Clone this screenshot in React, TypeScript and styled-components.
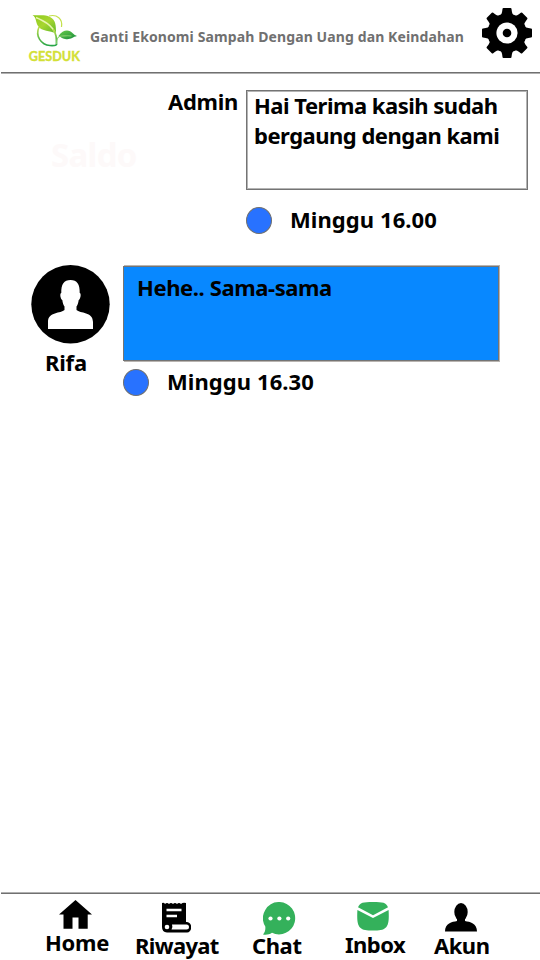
import React from "react";
import styled, { createGlobalStyle } from "styled-components";

const GlobalStyle = createGlobalStyle`
  * { box-sizing: border-box; }
  body { margin: 0; background: #fff; }
`;

const Screen = styled.div`
  display: flex;
  flex-direction: column;
  width: 540px;
  height: 960px;
  overflow: hidden;
  background: #fff;
  color: #000;
  font-family: "Noto Sans", "Open Sans", sans-serif;
  font-weight: 700;
`;

const Header = styled.header`
  display: flex;
  align-items: flex-start;
  height: 73px;
  margin-left: 1px;
  padding: 8px 8px 0 26px;
  border-bottom: 1px solid #707070;
  box-shadow: 0 1px 0 #b0b0b0;
`;

const Tagline = styled.h1`
  flex: 1;
  margin: 19px 0 0 7px;
  font-size: 14px;
  line-height: 20px;
  letter-spacing: 0.11px;
  white-space: nowrap;
  color: #707070;
`;

const Logo = styled.svg`
  flex: none;
  width: 56px;
  height: 56px;
`;

const Label = styled.span<{ $spacing?: number }>`
  font-size: 22px;
  line-height: 30px;
  letter-spacing: ${(p) => p.$spacing ?? 0}px;
  white-space: nowrap;
`;

const Conversation = styled.main`
  flex: 1;
  display: flex;
  flex-direction: column;
  gap: 31px;
  padding-top: 17px;
`;

const Message = styled.section`
  display: flex;
  align-items: flex-start;
`;

const Balance = styled.span`
  width: 117px;
  margin: 43px 0 0 51px;
  font-size: 33px;
  line-height: 44px;
  letter-spacing: -0.7px;
  color: #fdf9f9;
`;

const Sender = styled.div`
  width: 78px;
  margin-top: -4px;
`;

const Profile = styled.div`
  display: flex;
  flex-direction: column;
  width: 92px;
  margin-left: 31px;
`;

const ProfileName = styled.div`
  margin: 3px 0 0 14px;
`;

const Content = styled.div<{ $gap: number }>`
  display: flex;
  flex-direction: column;
  gap: ${(p) => p.$gap}px;
`;

const Bubble = styled.div<{ $own?: boolean }>`
  display: flex;
  flex-direction: column;
  width: ${(p) => (p.$own ? 376 : 282)}px;
  height: ${(p) => (p.$own ? 95 : 100)}px;
  margin-top: ${(p) => (p.$own ? 1 : 0)}px;
  padding: ${(p) => (p.$own ? "6px 13px" : "0 7px")};
  border: 1px solid #747474;
  box-shadow: ${(p) => (p.$own ? "1px 1px 0 #b8b4b0, 1px -1px 0 #b8b4b0" : "inset 0 0 0 1px #b4b4b4")};
  background: ${(p) => (p.$own ? "#0888ff" : "#fff")};

  ${Label} {
    position: relative;
    top: -1px;
  }
`;

const Time = styled.div`
  display: flex;
  align-items: center;
  gap: 18px;
  height: 27px;

  ${Label} {
    margin-top: -3px;
  }
`;

const Dot = styled.i`
  width: 26px;
  height: 27px;
  border: 1.5px solid #707070;
  border-radius: 50%;
  background: #2872ff;
`;

const TabBar = styled.nav`
  display: flex;
  height: 67px;
  margin-left: 1px;
  padding-left: 44px;
  border-top: 1px solid #707070;
  box-shadow: 0 -1px 0 #b0b0b0;
`;

const Tab = styled.a<{ $width: number; $top: number; $inset: number; $label: number }>`
  display: flex;
  flex-direction: column;
  width: ${(p) => p.$width}px;
  padding-top: ${(p) => p.$top}px;

  svg {
    flex: none;
    margin-left: ${(p) => p.$inset}px;
    margin-bottom: ${(p) => p.$label}px;
  }
`;

const GesdukLogo = () => (
  <Logo viewBox="0 0 56 56">
    <defs>
      <linearGradient id="leafLight" x1="0" y1="0" x2="1" y2="1">
        <stop offset="0" stopColor="#8ccb1c" />
        <stop offset="0.5" stopColor="#a8d630" />
        <stop offset="1" stopColor="#5fb82a" />
      </linearGradient>
      <linearGradient id="leafDark" x1="0" y1="0" x2="1" y2="1">
        <stop offset="0" stopColor="#69cc48" />
        <stop offset="1" stopColor="#168b3c" />
      </linearGradient>
      <linearGradient id="stem" x1="0" y1="0" x2="0" y2="1">
        <stop offset="0" stopColor="#c3e04a" />
        <stop offset="1" stopColor="#27a548" />
      </linearGradient>
    </defs>
    <path d="M22 8C30 6 36 11 34.500 19" fill="none" stroke="#c3e04a" strokeWidth="1.200" />
    <path d="M12 19C8 28 14 37 23 37.500q4 .3 6.500-.5" fill="none" stroke="url(#stem)" strokeWidth="1.600" />
    <path d="M5.500 7C12 8 17 6 23 9c6 3 6 9 6 16.500C23 22 15 24 11 18 8.500 14 9.500 9.500 5.500 7Z" fill="url(#leafLight)" />
    <path d="M9 9.500C17 13 25 17 28.500 26" fill="none" stroke="#e9f5b0" strokeWidth="1.500" />
    <path d="M26 21C29.500 26 29.500 30 29.500 37" fill="none" stroke="url(#stem)" strokeWidth="1.700" />
    <path d="M31.500 28C36 21.500 42 21 46 25.500q1.500 1.500 4 2.500C45 29 44 32 38 31c-3-.5-4-2-6.500-3Z" fill="url(#leafDark)" />
    <path d="M29.500 36c0-6 2.500-8 5-8s6-.5 10 0" fill="none" stroke="#86cf6c" strokeWidth="1.100" />
    <text
      x="1.800"
      y="52.600"
      fontFamily="Lato, sans-serif"
      fontSize="12.600"
      fontWeight="700"
      fill="#d3e036"
      stroke="#d3e036"
      strokeWidth="0.400"
      textLength="51"
      lengthAdjust="spacingAndGlyphs"
    >
      GESDUK
    </text>
  </Logo>
);

const teeth = [0, 45, 90, 135, 180, 225, 270, 315];

const GearIcon = () => (
  <svg width="50" height="50" viewBox="-25 -25 50 50">
    <circle r="19.500" />
    {teeth.map((angle) => (
      <path key={angle} transform={`rotate(${angle})`} d="M-8-16C-5.500-18-5-20-4.500-24q0-1 1-1H3.500q1 0 1 1C5-20 5.500-18 8-16Z" />
    ))}
    <circle r="10.6" fill="#fff" />
    <circle r="4.3" />
  </svg>
);

const Avatar = () => (
  <svg width="79" height="79" viewBox="0 0 79 79">
    <circle cx="39.5" cy="39.3" r="39.2" />
    <path
      fill="#fff"
      d="M39.500 15c6.500 0 9.500 4.300 9.200 13 1.700 0 1 6-1 7-.4 3-1 5-2.200 6.500V45c3.600 3.500 16.500 1.500 16.500 12v7H17v-7c0-10.500 13-8.500 16.500-12v-3.500c-1.200-1.500-1.800-3.500-2.200-6.500-2-1-2.700-7-1-7-.3-8.700 2.700-13 9.200-13Z"
    />
  </svg>
);

const HomeIcon = () => (
  <svg width="33" height="29" viewBox="0 0 33 29">
    <path d="M16.500 0 33 14.500H28.700V28.700H19.500V17.500H13.500V28.700H4.500V14.500H0Z" />
  </svg>
);

const HistoryIcon = () => (
  <svg width="29" height="31" viewBox="0 0 29 31">
    <path d="M0 1q2-1 3 1 2-2 4 0 2-2 4 0 2-2 4 0 2-2 4 0 2-2 5-1V20H25a4 5 0 0 1 0 10.500H5Q0 30 0 25Z" />
    <path d="M4.500 8H19.500M4.500 14H15" stroke="#fff" strokeWidth="2.500" />
    <path d="M10 22.500H24.500a2.500 2.500 0 0 1 0 5H9.500Q11 25 10 22.500Z" fill="#fff" />
    <circle cx="5" cy="25" r="2.300" fill="#fff" />
  </svg>
);

const ChatIcon = () => (
  <svg width="33" height="33" viewBox="0 0 33 33">
    <path fill="#34b15b" d="M16.800 0A16.200 16.200 0 1 1 9 30.800C6 32.700 3 33 0 32.500 2 30 2.600 28 2.300 24.500A16.200 16.200 0 0 1 16.800 0Z" />
    <g fill="#fff">
      <circle cx="7.500" cy="16.500" r="2.100" />
      <circle cx="16.400" cy="16.500" r="2.100" />
      <circle cx="25.200" cy="16.500" r="2.100" />
    </g>
  </svg>
);

const InboxIcon = () => (
  <svg width="32" height="29" viewBox="0 0 32 29">
    <path fill="#34b15b" d="M1 5.300C3 .5 6 0 16 0S29 .5 31 5.300L16 13.300Z" />
    <path fill="#34b15b" d="M.4 8 16 16 31.600 8C32.500 25 30.500 28.500 16 28.500S-.5 25 .4 8Z" />
  </svg>
);

const AccountIcon = () => (
  <svg width="32" height="29" viewBox="0 0 32 29">
    <ellipse cx="16" cy="9" rx="6.700" ry="9" />
    <path d="M12 14H20V18C25 19 32 20 32 28.500H0C0 20 7 19 12 18Z" />
  </svg>
);

export default function App() {
  return (
    <>
      <GlobalStyle />
      <Screen>
        <Header>
          <GesdukLogo />
          <Tagline>Ganti Ekonomi Sampah Dengan Uang dan Keindahan</Tagline>
          <GearIcon />
        </Header>
        <Conversation>
          <Message>
            <Balance>Saldo</Balance>
            <Sender>
              <Label $spacing={-0.3}>Admin</Label>
            </Sender>
            <Content $gap={17}>
              <Bubble>
                <Label $spacing={-0.5}>Hai Terima kasih sudah</Label>
                <Label $spacing={-0.5}>bergaung dengan kami</Label>
              </Bubble>
              <Time>
                <Dot />
                <Label $spacing={0.08}>Minggu 16.00</Label>
              </Time>
            </Content>
          </Message>
          <Message>
            <Profile>
              <Avatar />
              <ProfileName>
                <Label $spacing={-0.2}>Rifa</Label>
              </ProfileName>
            </Profile>
            <Content $gap={8}>
              <Bubble $own>
                <Label $spacing={-0.4}>Hehe.. Sama-sama</Label>
              </Bubble>
              <Time>
                <Dot />
                <Label $spacing={0.08}>Minggu 16.30</Label>
              </Time>
            </Content>
          </Message>
        </Conversation>
        <TabBar>
          <Tab $width={90} $top={6} $inset={14} $label={-2}>
            <HomeIcon />
            <Label $spacing={-0.3}>Home</Label>
          </Tab>
          <Tab $width={117} $top={8} $inset={27} $label={-3}>
            <HistoryIcon />
            <Label $spacing={-0.65}>Riwayat</Label>
          </Tab>
          <Tab $width={93} $top={7.5} $inset={11} $label={-4.5}>
            <ChatIcon />
            <Label $spacing={-0.4}>Chat</Label>
          </Tab>
          <Tab $width={89} $top={7.5} $inset={12} $label={-1.5}>
            <InboxIcon />
            <Label $spacing={-0.5}>Inbox</Label>
          </Tab>
          <Tab $width={60} $top={9} $inset={11} $label={-2}>
            <AccountIcon />
            <Label $spacing={-0.5}>Akun</Label>
          </Tab>
        </TabBar>
      </Screen>
    </>
  );
}
